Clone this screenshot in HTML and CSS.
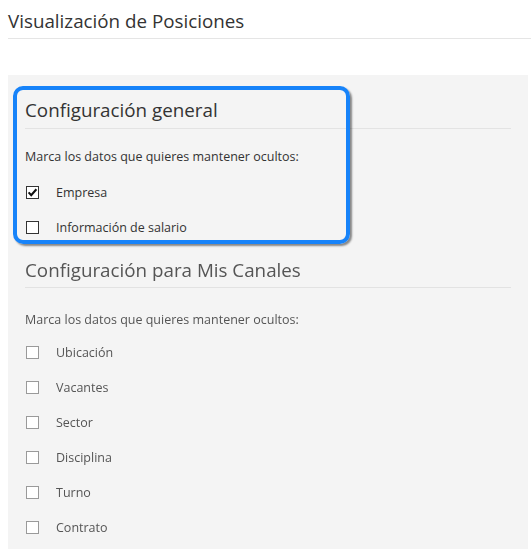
FILE: index.html
```html
<!DOCTYPE html>
<html lang="es">
<head>
<meta charset="utf-8">
<title>Visualización de Posiciones</title>
<link rel="stylesheet" href="styles.css">
</head>
<body>
<div class="page">
  <h1 class="title">Visualización de Posiciones</h1>
  <div class="panel">
    <section class="section section-general">
      <div class="highlight"></div>
      <h2 class="section-title">Configuración general</h2>
      <p class="hint">Marca los datos que quieres mantener ocultos:</p>
      <ul class="options">
        <li class="option">
          <span class="box checked"><svg viewBox="0 0 13 13" width="13" height="13"><path d="M2.6 6.4 L5.2 9.2 L10.4 3.2" fill="none" stroke="#111" stroke-width="2.1"/></svg></span>
          <span class="label">Empresa</span>
        </li>
        <li class="option">
          <span class="box"></span>
          <span class="label">Información de salario</span>
        </li>
      </ul>
    </section>
    <section class="section section-canales">
      <h2 class="section-title">Configuración para Mis Canales</h2>
      <p class="hint">Marca los datos que quieres mantener ocultos:</p>
      <ul class="options">
        <li class="option"><span class="box"></span><span class="label">Ubicación</span></li>
        <li class="option"><span class="box"></span><span class="label">Vacantes</span></li>
        <li class="option"><span class="box"></span><span class="label">Sector</span></li>
        <li class="option"><span class="box"></span><span class="label">Disciplina</span></li>
        <li class="option"><span class="box"></span><span class="label">Turno</span></li>
        <li class="option"><span class="box"></span><span class="label">Contrato</span></li>
      </ul>
    </section>
  </div>
</div>
</body>
</html>
```

FILE: styles.css
```css
html, body {
  margin: 0;
  padding: 0;
  background: #ffffff;
}

body {
  font-family: "Open Sans", "Noto Sans", "Liberation Sans", sans-serif;
  color: #333333;
}

.page {
  padding-left: 8px;
}

.title {
  margin: 0;
  font-size: 18.8px;
  font-weight: 400;
  line-height: 28px;
  padding-top: 7px;
  height: 31px;
  border-bottom: 1px solid #e5e5e5;
  color: #333333;
}

.panel {
  margin-top: 36px;
  width: 520px;
  background: #f4f4f4;
  padding: 21px 17px 4px 17px;
  box-sizing: border-box;
}

.section {
  position: relative;
}

.section-title {
  margin: 0;
  font-size: 18.8px;
  font-weight: 400;
  line-height: 28px;
  padding-bottom: 4px;
  border-bottom: 1px solid #e3e3e3;
  color: #333333;
}

.hint {
  margin: 18px 0 0 0;
  font-size: 12.5px;
  line-height: 20px;
}

.options {
  list-style: none;
  margin: 0;
  padding: 0;
}

.option {
  display: flex;
  align-items: center;
  height: 35px;
  font-size: 12.5px;
}

.section-general .options {
  margin-top: 8px;
}

.box {
  width: 13px;
  height: 13px;
  box-sizing: border-box;
  border: 1px solid #333333;
  background: #ffffff;
  margin-left: 1px;
  margin-right: 17px;
  position: relative;
  flex: none;
}

.box svg {
  position: absolute;
  left: -1px;
  top: -1px;
}

.label {
  line-height: 20px;
}

.highlight {
  position: absolute;
  left: -12px;
  top: -10px;
  width: 337px;
  height: 158px;
  box-sizing: border-box;
  border: 4px solid #1783f9;
  border-radius: 10px;
  box-shadow: 2px 2px 2px rgba(0, 0, 0, 0.45);
  pointer-events: none;
}

.section-canales {
  margin-top: 11px;
  filter: blur(0.5px);
}

.section-canales .section-title {
  color: #555555;
  padding-bottom: 3px;
  border-bottom-color: #e2e2e2;
}

.section-canales .hint {
  margin-top: 22px;
  color: #555555;
}

.section-canales .options {
  margin-top: 5px;
}

.section-canales .option {
  color: #555555;
}

.section-canales .box {
  border-color: #9a9a9a;
}
```
